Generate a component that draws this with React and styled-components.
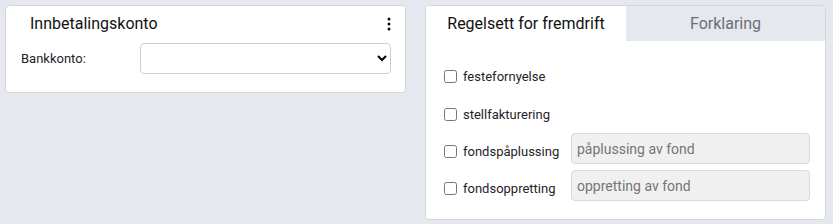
import React from 'react';
import styled, { createGlobalStyle } from 'styled-components';

const GlobalStyle = createGlobalStyle`
	html, body {
		margin: 0;
		padding: 0;
		background: #e5e8ee;
		font-family: Roboto, "Liberation Sans", sans-serif;
		color: #1f2328;
	}
`

const rules = [
	{ id: 'feste', label: 'festefornyelse' },
	{ id: 'stell', label: 'stellfakturering' },
	{ id: 'paapl', label: 'fondspåplussing', placeholder: 'påplussing av fond' },
	{ id: 'oppr', label: 'fondsoppretting', placeholder: 'oppretting av fond' },
];

export default function App() {
	return (
		<>
			<GlobalStyle />
			<Page>
				<Card>
					<CardHeader>
						<Title>Innbetalingskonto</Title>
						<MenuButton aria-label="meny">
							<svg width="4" height="14" viewBox="0 0 4 14">
								<circle cx="2" cy="2" r="1.5" fill="#111" />
								<circle cx="2" cy="7" r="1.5" fill="#111" />
								<circle cx="2" cy="12" r="1.5" fill="#111" />
							</svg>
						</MenuButton>
					</CardHeader>
					<FieldRow>
						<FieldLabel>Bankkonto:</FieldLabel>
						<Select>
							<option></option>
						</Select>
					</FieldRow>
				</Card>

				<Card>
					<Tabs>
						<Tab active>Regelsett for fremdrift</Tab>
						<Tab>Forklaring</Tab>
					</Tabs>
					<RuleList>
						{rules.map((r) => (
							<RuleRow key={r.id}>
								<RuleLabel>
									<Checkbox type="checkbox" />
									<span>{r.label}</span>
								</RuleLabel>
								{r.placeholder && <TextInput placeholder={r.placeholder} />}
							</RuleRow>
						))}
					</RuleList>
				</Card>
			</Page>
		</>
	)
}

const Page = styled.div`
	display: grid;
	grid-template-columns: 401px 401px;
	column-gap: 19px;
	align-items: start;
	padding: 5px 0 0 5px;
`

const Card = styled.div`
	background: #fff;
	border: 1px solid #d6d6d6;
	border-radius: 4px;
	box-sizing: border-box;
	overflow: hidden;
`

const CardHeader = styled.div`
	display: flex;
	align-items: center;
	justify-content: space-between;
	padding: 4px 14px 0 24px;
	height: 26px;
`

const Title = styled.div`
	font-size: 16px;
	color: #111;
`

const MenuButton = styled.div`
	display: flex;
	align-items: center;
	padding-top: 1px;
`

const FieldRow = styled.div`
	display: grid;
	grid-template-columns: 119px 251px;
	align-items: center;
	padding: 7px 0 18px 15px;
`

const FieldLabel = styled.label`
	font-size: 13px;
	color: #1f2328;
`

const Select = styled.select`
	height: 31px;
	width: 100%;
	border: 1px solid #cfcfcf;
	border-radius: 4px;
	background: #fff;
	font-family: inherit;
	font-size: 14px;
`

const Tabs = styled.div`
	display: grid;
	grid-template-columns: 200px 1fr;
	height: 35px;
`

const Tab = styled.div`
	display: flex;
	align-items: center;
	justify-content: center;
	font-size: 16px;
	background: ${(p) => (p.active ? '#fff' : '#e5e8ee')};
	color: ${(p) => (p.active ? '#111' : '#6b6f75')};
`

const RuleList = styled.div`
	display: flex;
	flex-direction: column;
	padding: 14px 15px 15px 17px;
`

const RuleRow = styled.div`
	display: grid;
	grid-template-columns: 128px 1fr;
	align-items: center;
	height: 37px;

	&:first-child {
		height: 38px;
	}
`

const RuleLabel = styled.label`
	display: flex;
	align-items: center;
	gap: 6px;
	padding-top: 5px;
	font-size: 13px;
	color: #1f2328;
`

const Checkbox = styled.input`
	width: 13px;
	height: 13px;
	margin: 0 0 0 1px;
`

const TextInput = styled.input`
	height: 31px;
	box-sizing: border-box;
	border: 1px solid #d9d9d9;
	border-radius: 4px;
	background: #f0f0f0;
	padding: 0 5px;
	font-family: inherit;
	font-size: 14px;

	&::placeholder {
		color: #757575;
	}
`
